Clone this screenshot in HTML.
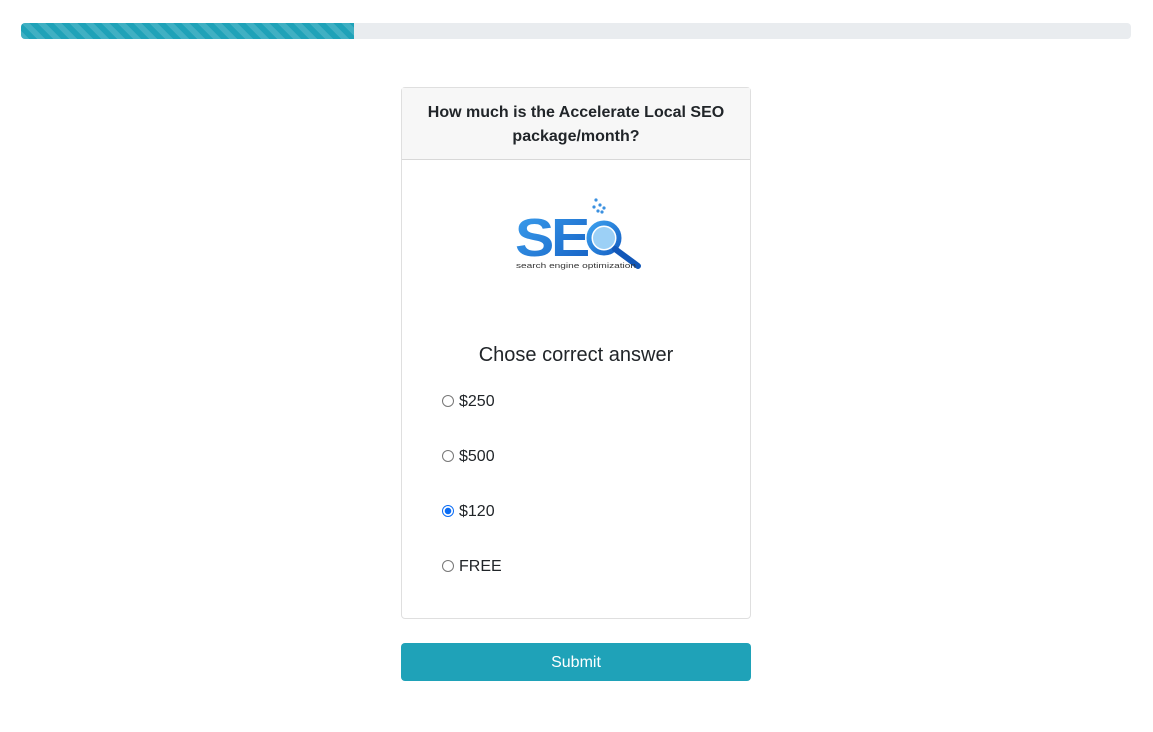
<!DOCTYPE html>
<html><head><style>
body{margin:0;background:#fff;font-family:"Liberation Sans",sans-serif;color:#212529;}
.prog{position:absolute;left:21px;top:23px;width:1110px;height:16px;background:#e9ecef;border-radius:4px;overflow:hidden}
.bar{width:333px;height:16px;background-color:#1fa2b8;background-image:linear-gradient(45deg,rgba(255,255,255,.15) 25%,transparent 25%,transparent 50%,rgba(255,255,255,.15) 50%,rgba(255,255,255,.15) 75%,transparent 75%,transparent);background-size:16px 16px}
.card{position:absolute;left:401px;top:87px;width:348px;height:530px;border:1px solid rgba(0,0,0,.125);border-radius:4px}
.hd{height:72px;background:#f7f7f7;border-bottom:1px solid rgba(0,0,0,.125);text-align:center;font-weight:bold;font-size:16px;line-height:24px;box-sizing:border-box;padding-top:13px}
.ch{position:absolute;top:256px;width:100%;text-align:center;font-size:20px}
.opt{position:absolute;left:40px;font-size:16px;display:flex;align-items:center}
.r{width:12px;height:12px;border:1px solid #777;border-radius:50%;margin-right:5px;box-sizing:border-box;position:relative;top:-1px}
.r.on{border:1px solid #0a6cf5;background:radial-gradient(circle,#0a6cf5 3px,#fff 3.5px)}
.btn{position:absolute;left:401px;top:643px;width:350px;height:38px;background:#1fa2b8;border-radius:4px;color:#fff;text-align:center;line-height:39px;font-size:16px}
</style></head><body>
<div class="prog"><div class="bar"></div></div>
<div class="card">
<div class="hd">How much is the Accelerate Local SEO<br>package/month?</div>
<svg style="position:absolute;left:110px;top:105px" width="130" height="80" viewBox="0 0 130 80">
<defs><linearGradient id="g" x1="0" y1="0" x2="1" y2="1"><stop offset="0" stop-color="#3ca0ee"/><stop offset="1" stop-color="#1560c4"/></linearGradient></defs>
<text x="3" y="63" font-family="Liberation Sans" font-weight="bold" font-size="54" fill="url(#g)" letter-spacing="-3" textLength="72" lengthAdjust="spacingAndGlyphs">SE</text>
<circle cx="92" cy="45" r="15" fill="none" stroke="url(#g)" stroke-width="5"/>
<circle cx="92" cy="45" r="11" fill="#5ab0f0" opacity=".6"/>
<line x1="103" y1="56" x2="126" y2="73" stroke="#1257b8" stroke-width="6" stroke-linecap="round"/>
<circle cx="84" cy="7" r="1.6" fill="#3a90e0"/><circle cx="88" cy="12" r="1.6" fill="#3a90e0"/><circle cx="82" cy="14" r="1.6" fill="#3a90e0"/><circle cx="92" cy="15" r="1.6" fill="#3a90e0"/><circle cx="86" cy="18" r="1.6" fill="#3a90e0"/><circle cx="90" cy="19" r="1.6" fill="#3a90e0"/>
<text x="4" y="75" font-family="Liberation Sans" font-size="7.5" fill="#333" textLength="120" lengthAdjust="spacingAndGlyphs">search engine optimization</text>
</svg>
<div class="ch">Chose correct answer</div>
<div class="opt" style="top:305px"><span class="r"></span>$250</div>
<div class="opt" style="top:360px"><span class="r"></span>$500</div>
<div class="opt" style="top:415px"><span class="r on"></span>$120</div>
<div class="opt" style="top:470px"><span class="r"></span>FREE</div>
</div>
<div class="btn">Submit</div>
</body></html>
